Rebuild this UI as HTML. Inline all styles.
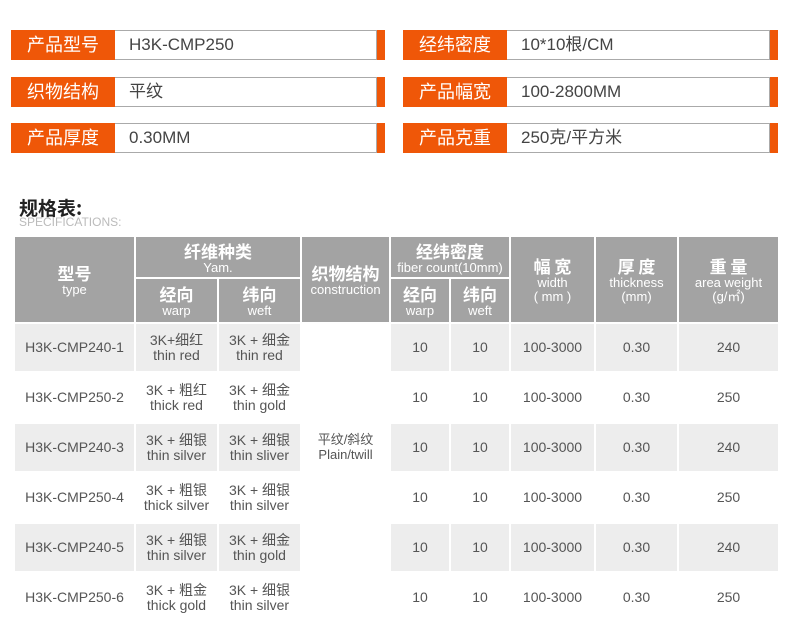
<!DOCTYPE html>
<html><head><meta charset="utf-8"><style>
*{margin:0;padding:0;box-sizing:border-box}
body{width:790px;height:632px;background:#fff;position:relative;overflow:hidden;font-family:"Liberation Sans","Noto Sans CJK SC",sans-serif}
.box{position:absolute;height:30px}
.lab{position:absolute;left:0;top:0;width:104px;height:30px;background:#ef5708;color:#fff;font-size:18px;line-height:30px;text-align:center}
.val{position:absolute;left:104px;top:0;height:30px;border:1px solid #aaa;border-left:none;background:#fff;color:#444;font-size:17px;line-height:28px;padding-left:14px}
.str{position:absolute;top:0;width:8px;height:30px;background:#ef5708}
.c{position:absolute;display:flex;flex-direction:column;align-items:center;justify-content:center;text-align:center;color:#555;font-size:14px;line-height:15px}
.h{background:#a3a3a3;color:#fff}
.h b{font-size:17px;line-height:21px;font-family:"Noto Sans CJK SC",sans-serif;font-weight:bold}
.h span{font-size:13px;line-height:14px}
.g{background:#ededed}
</style></head><body>

<div class="box" style="left:11px;top:30px;width:374px"><div class="lab">产品型号</div><div class="val" style="width:262px">H3K-CMP250</div><div class="str" style="left:366px"></div></div>
<div class="box" style="left:11px;top:77px;width:374px"><div class="lab">织物结构</div><div class="val" style="width:262px">平纹</div><div class="str" style="left:366px"></div></div>
<div class="box" style="left:11px;top:123px;width:374px"><div class="lab">产品厚度</div><div class="val" style="width:262px">0.30MM</div><div class="str" style="left:366px"></div></div>
<div class="box" style="left:403px;top:30px;width:375px"><div class="lab">经纬密度</div><div class="val" style="width:263px">10*10根/CM</div><div class="str" style="left:367px"></div></div>
<div class="box" style="left:403px;top:77px;width:375px"><div class="lab">产品幅宽</div><div class="val" style="width:263px">100-2800MM</div><div class="str" style="left:367px"></div></div>
<div class="box" style="left:403px;top:123px;width:375px"><div class="lab">产品克重</div><div class="val" style="width:263px">250克/平方米</div><div class="str" style="left:367px"></div></div>

<div style="position:absolute;left:19px;top:197px;font-size:19px;font-weight:bold;color:#222;font-family:'Noto Sans CJK SC',sans-serif;line-height:22px">规格表:</div>
<div style="position:absolute;left:19px;top:216px;font-size:12px;color:#bbb;line-height:13px">SPECIFICATIONS:</div>

<!-- header -->
<div class="c h" style="left:15px;top:237px;width:119px;height:85px"><b>型号</b><span>type</span></div>
<div class="c h" style="left:136px;top:237px;width:164px;height:40px"><b>纤维种类</b><span>Yam.</span></div>
<div class="c h" style="left:136px;top:279px;width:81px;height:43px"><b>经向</b><span>warp</span></div>
<div class="c h" style="left:219px;top:279px;width:81px;height:43px"><b>纬向</b><span>weft</span></div>
<div class="c h" style="left:302px;top:237px;width:87px;height:85px"><b>织物结构</b><span>construction</span></div>
<div class="c h" style="left:391px;top:237px;width:118px;height:40px"><b>经纬密度</b><span>fiber count(10mm)</span></div>
<div class="c h" style="left:391px;top:279px;width:58px;height:43px"><b>经向</b><span>warp</span></div>
<div class="c h" style="left:451px;top:279px;width:58px;height:43px"><b>纬向</b><span>weft</span></div>
<div class="c h" style="left:511px;top:237px;width:83px;height:85px"><b>幅 宽</b><span>width<br>( mm )</span></div>
<div class="c h" style="left:596px;top:237px;width:81px;height:85px"><b>厚 度</b><span>thickness<br>(mm)</span></div>
<div class="c h" style="left:679px;top:237px;width:99px;height:85px"><b>重 量</b><span>area weight<br>(g/㎡)</span></div>

<div class="c" style="left:302px;top:322px;width:87px;height:250px;font-size:13px">平纹/斜纹<br>Plain/twill</div>

<div id="rows"></div>
<script>
var d=[["H3K-CMP240-1","3K+细红<br>thin  red","3K + 细金<br>thin red","240"],
["H3K-CMP250-2","3K + 粗红<br>thick red","3K + 细金<br>thin gold","250"],
["H3K-CMP240-3","3K + 细银<br>thin silver","3K + 细银<br>thin sliver","240"],
["H3K-CMP250-4","3K + 粗银<br>thick silver","3K + 细银<br>thin silver","250"],
["H3K-CMP240-5","3K + 细银<br>thin silver","3K + 细金<br>thin gold","240"],
["H3K-CMP250-6","3K + 粗金<br>thick gold","3K + 细银<br>thin silver","250"]];
var cols=[[15,119],[136,81],[219,81],[391,58],[451,58],[511,83],[596,81],[679,99]];
var h="";
d.forEach(function(r,i){var t=324+i*50,g=i%2==0?" g":"";
var v=[r[0],r[1],r[2],"10","10","100-3000","0.30",r[3]];
v.forEach(function(x,j){h+='<div class="c'+g+'" style="left:'+cols[j][0]+'px;top:'+t+'px;width:'+cols[j][1]+'px;height:47px">'+x+'</div>';});});
document.getElementById("rows").outerHTML=h;
</script>
</body></html>
